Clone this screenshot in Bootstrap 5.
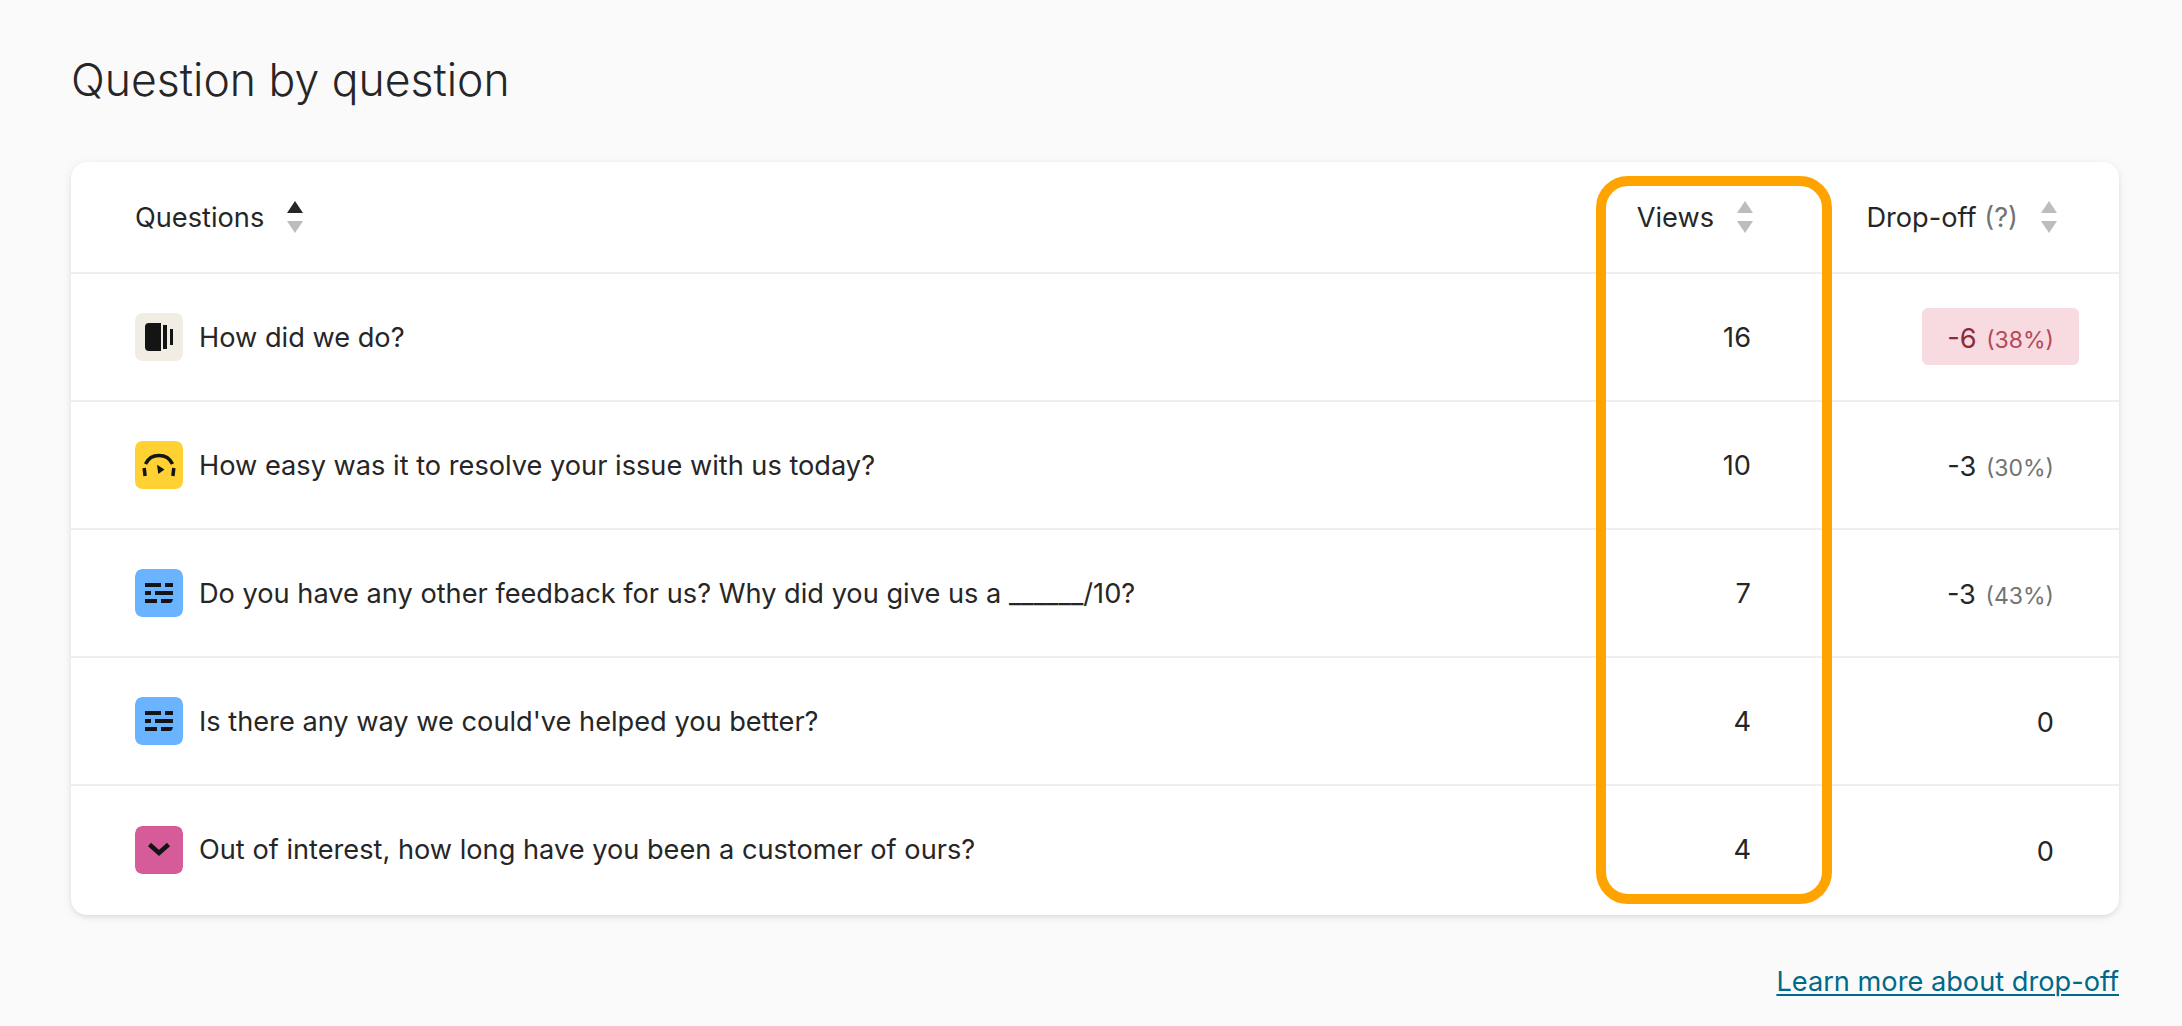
<!doctype html>
<html lang="en">
<head>
<meta charset="utf-8">
<title>Question by question</title>
<link href="https://cdn.jsdelivr.net/npm/bootstrap@5.3.0/dist/css/bootstrap.min.css" rel="stylesheet">
<style>
body{background:#fafafa;color:#262627;font-family:Inter,"Liberation Sans",sans-serif;font-size:27.2px;font-weight:375;height:1026px;overflow:hidden}
.page-wrap{padding:48px 63px 0 71px;position:relative}
.page-title{font-size:44.5px;font-weight:300;line-height:64px;margin:0 0 50px;color:#262627}
.panel{border:0;border-radius:16px;box-shadow:0 2px 4px rgba(0,0,0,.08),0 2px 12px rgba(0,0,0,.06);background:#fff;overflow:hidden}
.q-table{margin:0;table-layout:fixed;width:100%;--bs-table-bg:transparent;--bs-table-color:#262627;color:#262627}
.q-table th,.q-table td{border-bottom:2px solid #eeeeee;padding:0;vertical-align:middle;font-weight:375}
.q-table th{padding-top:2px}
.q-table tr:last-child td{border-bottom:0;padding-bottom:2px}
.q-table thead tr{height:111px}
.q-table tbody tr{height:128px}
.q-table tbody tr:last-child{height:130px}
.col-q{width:1529px}
.col-v{width:170px}
.cell-q{padding-left:64px!important}
.cell-v{padding-right:19px!important;padding-top:2px!important;text-align:right}
.cell-d{padding-right:40px!important;padding-bottom:2px!important;text-align:right}
.head-v{padding-right:17px!important}
.head-d{padding-right:62px!important}
.sort-gap{gap:23px}
.row-gap{gap:16px}
.q-text{padding-top:2px}
.sort-pair{display:inline-flex;flex-direction:column;gap:8px;width:16px;margin-top:-2px}
.sort-pair svg{display:block}
.q-icon{width:48px;height:48px;border-radius:7px;flex:none}
.drop-pill{display:inline-block;padding:0 25px;height:57px;line-height:61px;border-radius:6px;white-space:nowrap}
.drop-pill.is-bad{background:#f7dbe0;color:#8c2a3a}
.pct{font-size:23px;color:#737373;margin-left:2px}
.is-bad .pct{color:#b5485b}
.hint{color:#737373}
.orange-frame{position:absolute;left:1596px;top:176px;width:236px;height:728px;border:10px solid #ffa300;border-radius:32px;pointer-events:none}
.foot-link{color:#006989;text-decoration:underline;text-decoration-thickness:2px;text-underline-offset:3px}
.foot-row{padding-top:47px}
</style>
</head>
<body>
<div class="page-wrap">
  <h1 class="page-title">Question by question</h1>
  <div class="card panel">
    <table class="table q-table">
      <colgroup><col class="col-q"><col class="col-v"><col></colgroup>
      <thead>
        <tr>
          <th class="cell-q"><div class="d-flex align-items-center sort-gap">Questions
            <span class="sort-pair"><svg width="16" height="12" viewBox="0 0 16 12"><path d="M8 0l8 12H0z" fill="#262627"/></svg><svg width="16" height="12" viewBox="0 0 16 12"><path d="M0 0h16L8 12z" fill="#bdbdbd"/></svg></span></div></th>
          <th class="head-v"><div class="d-flex align-items-center justify-content-end sort-gap">Views
            <span class="sort-pair"><svg width="16" height="12" viewBox="0 0 16 12"><path d="M8 0l8 12H0z" fill="#bdbdbd"/></svg><svg width="16" height="12" viewBox="0 0 16 12"><path d="M0 0h16L8 12z" fill="#bdbdbd"/></svg></span></div></th>
          <th class="head-d"><div class="d-flex align-items-center justify-content-end sort-gap"><span class="text-nowrap">Drop-off <span class="hint">(?)</span></span>
            <span class="sort-pair"><svg width="16" height="12" viewBox="0 0 16 12"><path d="M8 0l8 12H0z" fill="#bdbdbd"/></svg><svg width="16" height="12" viewBox="0 0 16 12"><path d="M0 0h16L8 12z" fill="#bdbdbd"/></svg></span></div></th>
        </tr>
      </thead>
      <tbody>
        <tr>
          <td class="cell-q"><div class="d-flex align-items-center row-gap">
            <svg class="q-icon" viewBox="0 0 48 48"><rect width="48" height="48" rx="7" fill="#f1ece4"/><path d="M14 10h12v28H14a4 4 0 0 1-4-4V14a4 4 0 0 1 4-4z" fill="#141414"/><rect x="28" y="12" width="4" height="24" fill="#141414"/><rect x="35" y="16" width="3" height="16" fill="#141414"/></svg>
            <span class="q-text">How did we do?</span></div></td>
          <td class="cell-v">16</td>
          <td class="cell-d"><span class="drop-pill is-bad">-6 <span class="pct">(38%)</span></span></td>
        </tr>
        <tr>
          <td class="cell-q"><div class="d-flex align-items-center row-gap">
            <svg class="q-icon" viewBox="0 0 48 48"><rect width="48" height="48" rx="7" fill="#ffd133"/><g fill="none" stroke="#141414" stroke-width="3.500"><path d="M10.500 23a15 15 0 0 1 27 0"/><path d="M9.200 27l.9 8"/><path d="M38.800 27l-.9 8"/></g><path d="M22 23.700l7.500 4.800-6.200 4.500z" fill="#141414"/></svg>
            <span class="q-text">How easy was it to resolve your issue with us today?</span></div></td>
          <td class="cell-v">10</td>
          <td class="cell-d"><span class="drop-pill">-3 <span class="pct">(30%)</span></span></td>
        </tr>
        <tr>
          <td class="cell-q"><div class="d-flex align-items-center row-gap">
            <svg class="q-icon" viewBox="0 0 48 48"><rect width="48" height="48" rx="7" fill="#69b3ff"/><g fill="#141414"><rect x="10" y="14" width="16" height="4"/><rect x="30" y="14" width="8" height="4"/><rect x="10" y="22" width="6" height="4"/><rect x="20" y="22" width="18" height="4"/><rect x="10" y="30" width="12" height="4"/><path d="M26 30h12l-1 3-2 1h-9z"/></g></svg>
            <span class="q-text">Do you have any other feedback for us? Why did you give us a ______/10?</span></div></td>
          <td class="cell-v">7</td>
          <td class="cell-d"><span class="drop-pill">-3 <span class="pct">(43%)</span></span></td>
        </tr>
        <tr>
          <td class="cell-q"><div class="d-flex align-items-center row-gap">
            <svg class="q-icon" viewBox="0 0 48 48"><rect width="48" height="48" rx="7" fill="#69b3ff"/><g fill="#141414"><rect x="10" y="14" width="16" height="4"/><rect x="30" y="14" width="8" height="4"/><rect x="10" y="22" width="6" height="4"/><rect x="20" y="22" width="18" height="4"/><rect x="10" y="30" width="12" height="4"/><path d="M26 30h12l-1 3-2 1h-9z"/></g></svg>
            <span class="q-text">Is there any way we could've helped you better?</span></div></td>
          <td class="cell-v">4</td>
          <td class="cell-d"><span class="drop-pill">0</span></td>
        </tr>
        <tr>
          <td class="cell-q"><div class="d-flex align-items-center row-gap">
            <svg class="q-icon" viewBox="0 0 48 48"><rect width="48" height="48" rx="7" fill="#d65c99"/><path d="M14.500 18.500l9.500 8.500 9.500-8.500" fill="none" stroke="#141414" stroke-width="4.500"/></svg>
            <span class="q-text">Out of interest, how long have you been a customer of ours?</span></div></td>
          <td class="cell-v">4</td>
          <td class="cell-d"><span class="drop-pill">0</span></td>
        </tr>
      </tbody>
    </table>
  </div>
  <div class="foot-row text-end"><a class="foot-link" href="#">Learn more about drop-off</a></div>
  <div class="orange-frame"></div>
</div>
<script src="https://cdn.jsdelivr.net/npm/bootstrap@5.3.0/dist/js/bootstrap.bundle.min.js"></script>
</body>
</html>
